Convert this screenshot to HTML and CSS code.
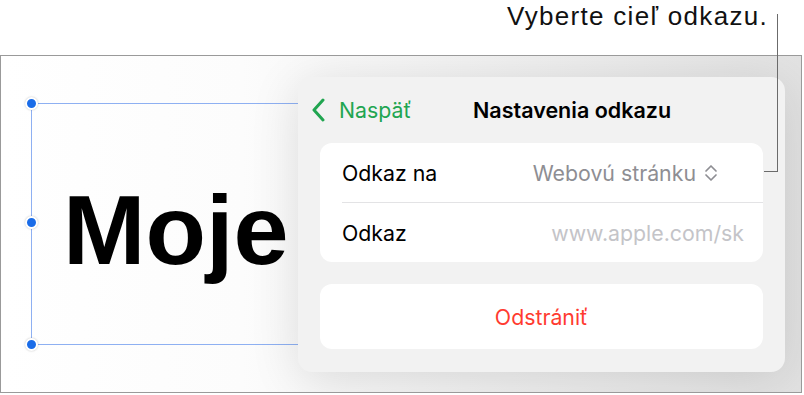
FILE: index.html
```html
<!DOCTYPE html>
<html lang="sk">
<head>
  <meta charset="UTF-8">
  <meta name="viewport" content="width=device-width, initial-scale=1.0">
  <title>Nastavenia odkazu</title>
  <link rel="stylesheet" href="styles.css">
</head>
<body>
  <div class="callout">
    <span class="callout-text">Vyberte cieľ odkazu.</span>
    <div class="callout-line"></div>
  </div>

  <div class="canvas">
    <div class="textbox">
      <span class="handle handle-top"></span>
      <span class="handle handle-mid"></span>
      <span class="handle handle-bottom"></span>
      <div class="textbox-text">Moje</div>
    </div>

    <div class="popover">
      <div class="popover-header">
        <div class="back">
          <svg width="14" height="24" viewBox="0 0 14 24">
            <path d="M12 2 L3 12 L12 22" fill="none" stroke="#21a550" stroke-width="3" stroke-linecap="round" stroke-linejoin="round"/>
          </svg>
          <span>Naspäť</span>
        </div>
        <div class="title">Nastavenia odkazu</div>
      </div>

      <div class="group">
        <div class="row">
          <span class="label">Odkaz na</span>
          <span class="value select">
            Webovú stránku
            <svg width="14" height="18" viewBox="0 0 14 18">
              <path d="M2 7 L7 2 L12 7 M2 11 L7 16 L12 11" fill="none" stroke="#8e8e93" stroke-width="1.7" stroke-linecap="round" stroke-linejoin="round"/>
            </svg>
          </span>
        </div>
        <div class="row">
          <span class="label">Odkaz</span>
          <span class="value placeholder">www.apple.com/sk</span>
        </div>
      </div>

      <div class="group delete">Odstrániť</div>
    </div>
  </div>
</body>
</html>
```

FILE: styles.css
```css
body {
  margin: 0;
  width: 804px;
  height: 395px;
  overflow: hidden;
  background: #fff;
  font-family: Inter, "Noto Sans", sans-serif;
}

.callout {
  position: relative;
  height: 55px;
  text-align: right;
  padding-right: 37px;
}

.callout-text {
  display: inline-block;
  margin-top: 1px;
  font-family: "Liberation Sans", Arial, sans-serif;
  font-size: 26px;
  letter-spacing: 1.3px;
  margin-right: -1px;
  color: #111;
}

.callout-line {
  position: absolute;
  left: 764px;
  top: 14px;
  width: 13px;
  height: 157px;
  border-right: 1.5px solid #6b6b6b;
  border-bottom: 1.5px solid #6b6b6b;
  z-index: 5;
}

.canvas {
  position: relative;
  width: 800px;
  height: 336px;
  border: 1px solid #9a9a9a;
  background: linear-gradient(to right, #fff 0%, #fcfcfc 30%, #ececec 75%, #e2e2e2 100%);
  overflow: hidden;
}

.textbox {
  position: relative;
  margin: 47px 0 0 30px;
  width: 300px;
  height: 240px;
  border-top: 1px solid #8eb0f2;
  border-left: 1px solid #8eb0f2;
  border-bottom: 1px solid #8eb0f2;
}

.handle {
  position: absolute;
  left: -7px;
  width: 9px;
  height: 9px;
  border-radius: 50%;
  background: #1a6ce8;
  border: 2px solid #fff;
  box-shadow: 0 0 2px rgba(0, 0, 0, 0.25);
}

.handle-top { top: -7px; }
.handle-mid { top: 112px; }
.handle-bottom { bottom: -7px; }

.textbox-text {
  padding: 76px 0 0 31px;
  font-family: "Liberation Sans", Arial, sans-serif;
  font-weight: bold;
  font-size: 99px;
  line-height: 99px;
  color: #000;
}

.popover {
  position: absolute;
  left: 297px;
  top: 21px;
  width: 487px;
  height: 295px;
  box-sizing: border-box;
  padding: 0 22px;
  background: #f2f2f2;
  border-radius: 14px;
  box-shadow: 0 8px 50px rgba(0, 0, 0, 0.12);
}

.popover-header {
  display: flex;
  align-items: center;
  height: 66px;
  margin-left: -9px;
}

.back {
  display: flex;
  align-items: center;
  gap: 14px;
  width: 162px;
  font-size: 21.3px;
  color: #21a550;
}

.title {
  font-size: 21.5px;
  font-weight: 600;
  color: #000;
}

.group {
  background: #fff;
  border-radius: 12px;
}

.row {
  display: flex;
  align-items: center;
  justify-content: space-between;
  height: 59px;
  margin-left: 22px;
  padding-right: 19px;
  font-size: 21.3px;
}

.row + .row {
  border-top: 1px solid #e3e3e5;
}

.label {
  color: #000;
}

.value {
  display: flex;
  align-items: center;
  gap: 8px;
  color: #8e8e93;
}

.select {
  margin-right: 26px;
}

.placeholder {
  color: #c4c4c8;
}

.delete {
  margin-top: 22px;
  height: 65px;
  display: flex;
  align-items: center;
  justify-content: center;
  font-size: 21.3px;
  color: #ff3b30;
}
```
